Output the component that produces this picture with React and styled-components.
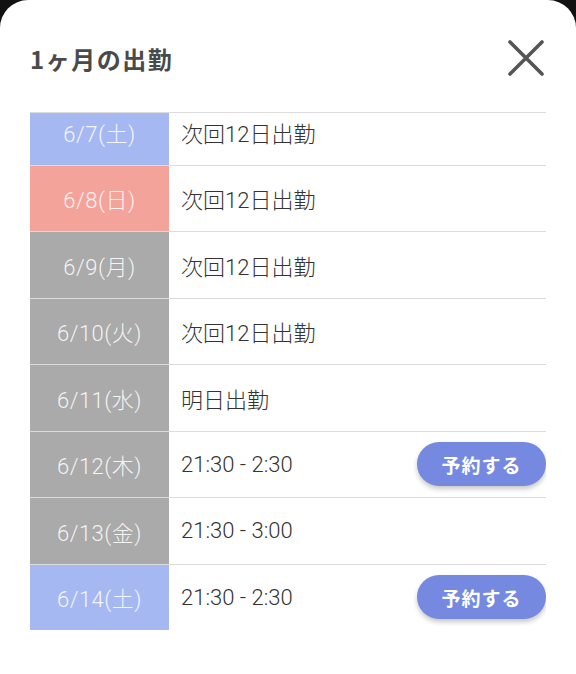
import React, { useLayoutEffect, useRef } from "react";
import styled, { createGlobalStyle } from "styled-components";

const Global = createGlobalStyle`
  html, body { margin: 0; padding: 0; background: #111; }
  body { font-family: Roboto, "Noto Sans CJK JP", "Noto Sans", sans-serif; }
  * { box-sizing: border-box; }
`;

const Sheet = styled.div`
  width: 576px;
  height: 674px;
  background: #fff;
  border-radius: 28px 28px 0 0;
  padding: 0 30px;
  display: flex;
  flex-direction: column;
`;

const Header = styled.div`
  display: flex;
  align-items: center;
  justify-content: space-between;
  height: 40px;
  margin-top: 38px;
  margin-bottom: 34px;
`;

const Title = styled.h1`
  margin: 0;
  font-family: "Noto Sans CJK JP", sans-serif;
  font-size: 24px;
  font-weight: 700;
  color: #4a4a4a;
  letter-spacing: 1.5px;
`;

const Close = styled.button`
  width: 40px;
  height: 40px;
  border: 0;
  background: none;
  padding: 0;
  display: flex;
  align-items: center;
  justify-content: center;
  cursor: pointer;
`;

const List = styled.div`
  height: 518px;
  overflow: hidden;
  border-top: 1px solid #dcdcdc;
`;

const Row = styled.div`
  display: flex;
  align-items: stretch;
  height: 66.5px;
  border-bottom: 1px solid #dcdcdc;
`;

const DateCell = styled.div`
  width: 139px;
  flex: none;
  display: flex;
  align-items: center;
  justify-content: center;
  background: ${(p) => p.$bg};
  color: rgba(255, 255, 255, 0.88);
  font-size: 22px;
  font-weight: 300;
  letter-spacing: 0.5px;
`;

const Info = styled.div`
  flex: 1;
  display: flex;
  align-items: center;
  justify-content: space-between;
  padding-left: 12px;
  font-size: 22px;
  font-weight: 300;
  color: #333;
`;

const Reserve = styled.button`
  width: 129px;
  height: 44px;
  border: 0;
  border-radius: 22px;
  background: #7489df;
  color: #fff;
  font-family: "Noto Sans CJK JP", sans-serif;
  font-size: 19px;
  font-weight: 700;
  letter-spacing: 1px;
  box-shadow: 0 3px 5px rgba(0, 0, 0, 0.22);
  cursor: pointer;
`;

const COLORS = { sat: "#a6b8f2", sun: "#f4a39b", day: "#aaaaaa" };

const rows = [
  { d: "6/7(土)", k: "sat", t: "次回12日出勤" },
  { d: "6/8(日)", k: "sun", t: "次回12日出勤" },
  { d: "6/9(月)", k: "day", t: "次回12日出勤" },
  { d: "6/10(火)", k: "day", t: "次回12日出勤" },
  { d: "6/11(水)", k: "day", t: "明日出勤" },
  { d: "6/12(木)", k: "day", t: "21:30 - 2:30", r: true },
  { d: "6/13(金)", k: "day", t: "21:30 - 3:00" },
  { d: "6/14(土)", k: "sat", t: "21:30 - 2:30", r: true },
];

export default function App() {
  const ref = useRef(null);
  useLayoutEffect(() => {
    if (ref.current) ref.current.scrollTop = 14;
  }, []);
  return (
    <>
      <Global />
      <Sheet>
        <Header>
          <Title>1ヶ月の出勤</Title>
          <Close aria-label="閉じる">
            <svg width="38" height="38" viewBox="0 0 38 38">
              <path d="M3 3 L35 35 M35 3 L3 35" stroke="#555" strokeWidth="3.6" strokeLinecap="round" fill="none" />
            </svg>
          </Close>
        </Header>
        <List ref={ref}>
          {rows.map((r) => (
            <Row key={r.d}>
              <DateCell $bg={COLORS[r.k]}>{r.d}</DateCell>
              <Info>
                <span>{r.t}</span>
                {r.r && <Reserve>予約する</Reserve>}
              </Info>
            </Row>
          ))}
        </List>
      </Sheet>
    </>
  );
}
